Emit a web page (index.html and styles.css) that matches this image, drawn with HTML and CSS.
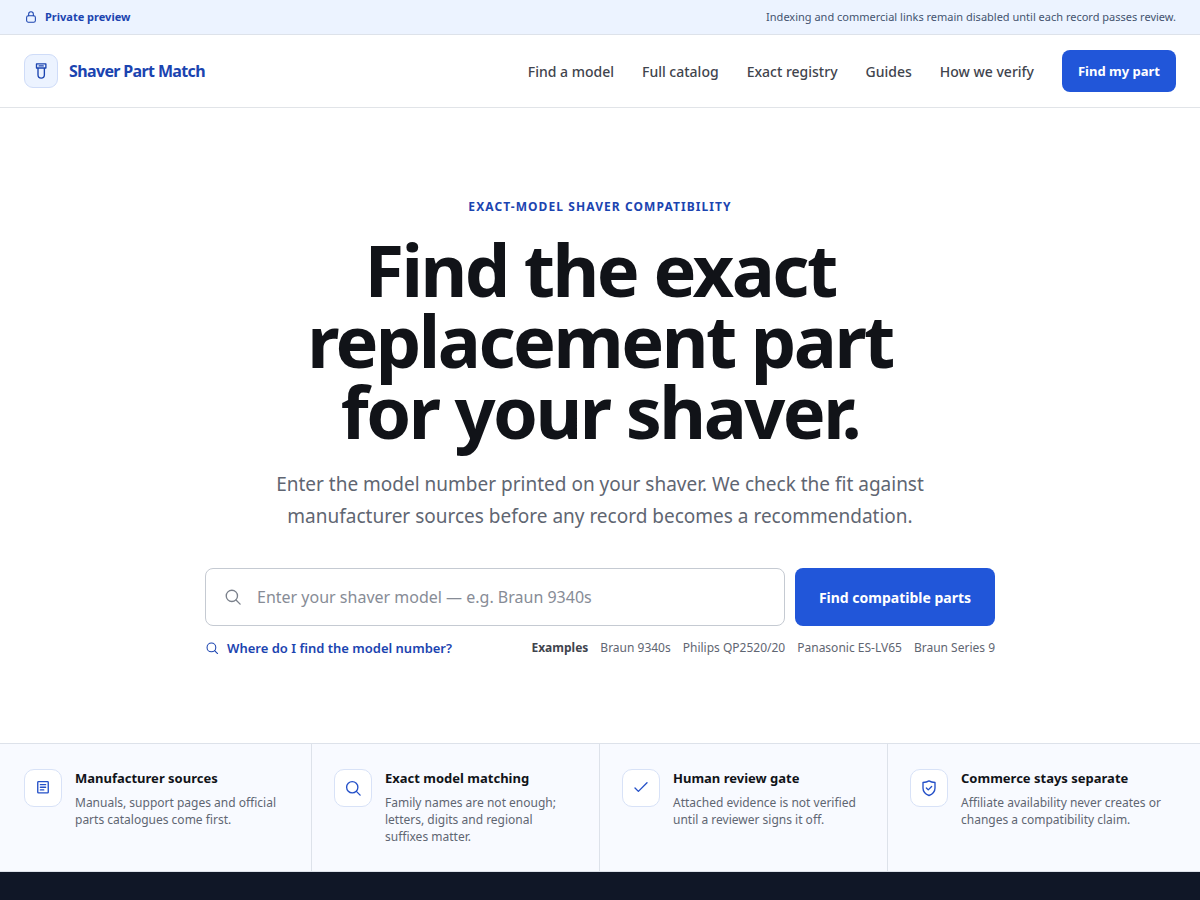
FILE: index.html
```html
<!DOCTYPE html>
<html lang="en">
<head>
<meta charset="utf-8">
<meta name="viewport" content="width=device-width, initial-scale=1">
<title>Shaver Part Match</title>
<link rel="stylesheet" href="styles.css">
</head>
<body>
<div class="notice">
  <div class="container notice-inner">
    <strong class="notice-label">
      <svg class="icon icon-sm" viewBox="0 0 24 24" aria-hidden="true"><rect x="4.500" y="10" width="15" height="11" rx="3"/><path d="M8 10V7a4 4 0 0 1 8 0v3"/></svg>
      Private preview
    </strong>
    <span class="notice-text">Indexing and commercial links remain disabled until each record passes review.</span>
  </div>
</div>
<header class="header">
  <div class="container header-inner">
    <a class="brand" href="#">
      <span class="brand-mark"><svg class="icon icon-md" viewBox="0 0 24 24" aria-hidden="true"><path d="M6 2.500h12.500V8H6zM9.500 5.200h5.500M8 8v9a4.250 4.500 0 0 0 8.500 0V8"/></svg></span>
      <span>Shaver Part Match</span>
    </a>
    <nav class="nav" aria-label="Main">
      <a class="nav-link" href="#">Find a model</a>
      <a class="nav-link" href="#">Full catalog</a>
      <a class="nav-link" href="#">Exact registry</a>
      <a class="nav-link" href="#">Guides</a>
      <a class="nav-link" href="#">How we verify</a>
      <a class="button button-small" href="#">Find my part</a>
    </nav>
  </div>
</header>
<main>
  <section class="hero">
    <p class="eyebrow">Exact-model shaver compatibility</p>
    <h1 class="title">Find the exact replacement part for your shaver.</h1>
    <p class="lead">Enter the model number printed on your shaver. We check the fit against manufacturer sources before any record becomes a recommendation.</p>
    <div class="finder">
      <form class="search">
        <label class="field">
          <svg class="icon icon-md" viewBox="0 0 24 24" aria-hidden="true"><circle cx="10.500" cy="10.500" r="7.500"/><path d="m16 16 5.500 5.500"/></svg>
          <input class="input" type="text" aria-label="Shaver model" placeholder="Enter your shaver model — e.g. Braun 9340s">
        </label>
        <button class="button button-large" type="submit">Find compatible parts</button>
      </form>
      <div class="helpers">
        <a class="help-link" href="#"><svg class="icon icon-sm" viewBox="0 0 24 24" aria-hidden="true"><circle cx="11" cy="11" r="7.500"/><path d="m16.500 16.500 5 5"/></svg>Where do I find the model number?</a>
        <div class="examples">
          <strong class="examples-label">Examples</strong>
          <a class="example" href="#">Braun 9340s</a>
          <a class="example" href="#">Philips QP2520/20</a>
          <a class="example" href="#">Panasonic ES-LV65</a>
          <a class="example" href="#">Braun Series 9</a>
        </div>
      </div>
    </div>
  </section>
  <section class="trust" aria-label="How records are checked">
    <div class="container trust-grid">
      <article class="trust-item">
        <span class="trust-mark"><svg class="icon icon-md" viewBox="0 0 24 24" aria-hidden="true"><rect x="5" y="3.500" width="14" height="15" rx="1"/><path d="M8.500 7.500h7M8.500 11h7M8.500 14.500h4.500"/></svg></span>
        <div><h2 class="trust-title">Manufacturer sources</h2><p class="trust-text">Manuals, support pages and official parts catalogues come first.</p></div>
      </article>
      <article class="trust-item">
        <span class="trust-mark"><svg class="icon icon-md" viewBox="0 0 24 24" aria-hidden="true"><circle cx="11" cy="11" r="7.500"/><path d="m16.500 16.500 5 5"/></svg></span>
        <div><h2 class="trust-title">Exact model matching</h2><p class="trust-text">Family names are not enough; letters, digits and regional suffixes matter.</p></div>
      </article>
      <article class="trust-item">
        <span class="trust-mark"><svg class="icon icon-md" viewBox="0 0 24 24" aria-hidden="true"><path d="m4 12 4.500 4.500L20 5"/></svg></span>
        <div><h2 class="trust-title">Human review gate</h2><p class="trust-text">Attached evidence is not verified until a reviewer signs it off.</p></div>
      </article>
      <article class="trust-item">
        <span class="trust-mark"><svg class="icon icon-md" viewBox="0 0 24 24" aria-hidden="true"><path d="M12 2.500c2.500 1.500 5 2 8 2.200V12c0 5-3.500 8.300-8 10-4.500-1.700-8-5-8-10V4.700c3-.2 5.500-.7 8-2.200z"/><path d="m8.500 12 2.500 2.500 4.500-4.500"/></svg></span>
        <div><h2 class="trust-title">Commerce stays separate</h2><p class="trust-text">Affiliate availability never creates or changes a compatibility claim.</p></div>
      </article>
    </div>
  </section>
  <section class="dark-band"></section>
</main>
</body>
</html>
```
FILE: styles.css
```css
* { box-sizing: border-box; }

body {
  margin: 0;
  min-height: 100vh;
  display: flex;
  flex-direction: column;
  background: #fff;
  color: #111318;
  font-family: "Noto Sans", sans-serif;
}

a { color: inherit; text-decoration: none; }
h1, h2, p { margin: 0; }

main { flex: 1; display: flex; flex-direction: column; }

.container {
  width: 100%;
  max-width: 1200px;
  margin: 0 auto;
  padding: 0 24px;
}

.icon {
  flex: none;
  fill: none;
  stroke: currentColor;
  stroke-width: 1.8;
  stroke-linecap: round;
  stroke-linejoin: round;
}
.icon-sm { width: 14px; height: 14px; }
.icon-md { width: 18px; height: 18px; }

.notice {
  background: #ecf3ff;
  border-bottom: 1px solid #dde2ea;
  font-size: 11px;
  line-height: 18px;
}
.notice-inner {
  display: flex;
  align-items: center;
  justify-content: space-between;
  gap: 24px;
  padding-top: 8px;
  padding-bottom: 8px;
}
.notice-label { display: flex; align-items: center; gap: 7px; color: #1b44b0; font-weight: 700; }
.notice-text { color: #44546f; }

.header { border-bottom: 1px solid #e1e4e8; }
.header-inner {
  display: flex;
  align-items: center;
  justify-content: space-between;
  gap: 24px;
  min-height: 72px;
}
.brand {
  display: flex;
  align-items: center;
  gap: 11px;
  color: #1b44b0;
  font-size: 16px;
  font-weight: 700;
  letter-spacing: -0.04em;
}
.brand-mark {
  display: grid;
  place-items: center;
  width: 34px;
  height: 34px;
  border: 1px solid #cfdcf8;
  border-radius: 9px;
  background: #ecf3ff;
}
.nav { display: flex; align-items: center; gap: 28px; }
.nav-link { color: #3f444d; font-size: 14px; font-weight: 500; }

.button {
  display: inline-flex;
  align-items: center;
  justify-content: center;
  border: 0;
  border-radius: 8px;
  background: #2156d9;
  color: #fff;
  font-family: inherit;
  font-weight: 700;
}
.button-small { min-height: 42px; padding: 0 16px; font-size: 13px; }
.button-large { min-height: 58px; padding: 0 16px; font-size: 14px; }

.hero {
  display: flex;
  flex-direction: column;
  align-items: center;
  padding: 89px 24px 85px;
  text-align: center;
}
.eyebrow {
  color: #1b44b0;
  font-size: 12px;
  line-height: 20px;
  font-weight: 700;
  letter-spacing: 0.09em;
  text-transform: uppercase;
}
.title {
  max-width: 680px;
  margin-top: 17px;
  font-size: 72px;
  line-height: 71px;
  font-weight: 700;
  letter-spacing: -0.035em;
}
.lead {
  max-width: 680px;
  margin-top: 21px;
  color: #5f6672;
  font-size: 19px;
  line-height: 32px;
}
.finder { width: 100%; max-width: 790px; margin-top: 36px; }
.search { display: grid; grid-template-columns: 1fr 200px; gap: 10px; }
.field {
  display: flex;
  align-items: center;
  gap: 15px;
  padding: 0 18px;
  border: 1px solid #c5cad2;
  border-radius: 8px;
  color: #7a808b;
}
.input {
  flex: 1;
  min-width: 0;
  padding: 0;
  border: 0;
  outline: 0;
  background: none;
  color: #111318;
  font-family: inherit;
  font-size: 16px;
}
.input::placeholder { color: #878c96; opacity: 1; }
.helpers {
  display: flex;
  justify-content: space-between;
  gap: 16px;
  margin-top: 12px;
  font-size: 12px;
  line-height: 20px;
}
.help-link { display: flex; align-items: center; gap: 8px; color: #1b44b0; font-size: 13px; font-weight: 600; }
.examples { display: flex; gap: 12px; color: #5f6672; }
.examples-label { color: #3f444d; }

.trust {
  border-top: 1px solid #dde2ea;
  border-bottom: 1px solid #dde2ea;
  background: #f8faff;
}
.trust-grid { display: grid; grid-template-columns: repeat(4, 1fr); }
.trust-item {
  display: flex;
  gap: 13px;
  padding: 25px 22px 26px;
  border-right: 1px solid #dde2ea;
}
.trust-item:first-child { padding-left: 0; }
.trust-item:last-child { border-right: 0; padding-right: 0; }
.trust-mark {
  flex: none;
  display: grid;
  place-items: center;
  width: 38px;
  height: 38px;
  border: 1px solid #d8e2f7;
  border-radius: 10px;
  background: #fff;
  color: #2450c8;
}
.trust-title { font-size: 13px; line-height: 18px; font-weight: 700; }
.trust-text { margin-top: 7px; color: #5f6672; font-size: 12px; line-height: 17px; }

.dark-band { flex: 1; background: #101727; }
```
